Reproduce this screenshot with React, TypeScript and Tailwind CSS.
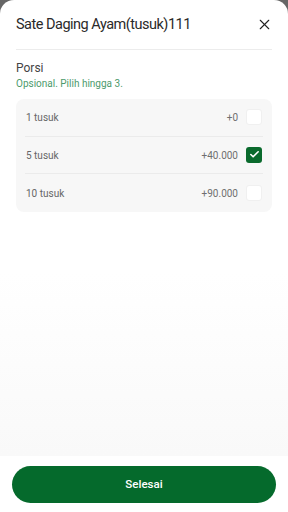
import { X, Check } from 'lucide-react'

interface OptionRowProps {
  label: string
  price: string
  checked?: boolean
  last?: boolean
}

function OptionRow({ label, price, checked, last }: OptionRowProps) {
  return (
    <div
      className={`flex h-[37.5px] items-center pl-[1px] pr-[1px] ${
        last ? '' : 'border-b border-[#ebebeb]'
      }`}
    >
      <span className="flex-1 pt-[1px] text-[10px] text-[#666]">{label}</span>
      <span className="mr-2 pt-[1px] text-[10px] text-[#6f6f6f]">{price}</span>
      {checked ? (
        <span className="flex h-4 w-4 items-center justify-center rounded-[3px] bg-[#0a6a2d]">
          <Check size={11} strokeWidth={3.5} className="text-white" />
        </span>
      ) : (
        <span className="h-4 w-4 rounded-[3px] border border-[#f0f0f0] bg-white" />
      )}
    </div>
  )
}

export default function App() {
  return (
    <div
      className="h-[512px] w-[288px] bg-[#666]"
      style={{ fontFamily: 'Roboto, "Noto Sans", sans-serif' }}
    >
      <div className="flex h-full flex-col rounded-t-[14px] bg-white">
        <div className="mx-4 flex h-[50px] items-center justify-between border-b border-[#ececec]">
          <h1 className="text-[14.5px] font-normal tracking-[-0.5px] text-[#2a2a2a]">
            Sate Daging Ayam(tusuk)111
          </h1>
          <X size={17} strokeWidth={1.6} className="mr-[-1px] text-[#222]" />
        </div>

        <div className="px-4 pt-[10px]">
          <div className="text-[12px] leading-4 text-[#444]">Porsi</div>
          <div className="text-[10px] leading-4 text-[#4d9a6c]">
            Opsional. Pilih hingga 3.
          </div>
          <div className="mt-[7px] rounded-lg bg-[#f7f7f7] px-[9px]">
            <OptionRow label="1 tusuk" price="+0" />
            <OptionRow label="5 tusuk" price="+40.000" checked />
            <OptionRow label="10 tusuk" price="+90.000" last />
          </div>
        </div>

        <div className="flex-1 bg-linear-to-b from-white from-25% to-[#f9f9f9]" />

        <div className="bg-white px-3 pb-[9px] pt-[10px]">
          <button className="flex h-[37px] w-full items-center justify-center rounded-full bg-[#056a2c] text-[11.5px] font-medium text-white">
            Selesai
          </button>
        </div>
      </div>
    </div>
  )
}
